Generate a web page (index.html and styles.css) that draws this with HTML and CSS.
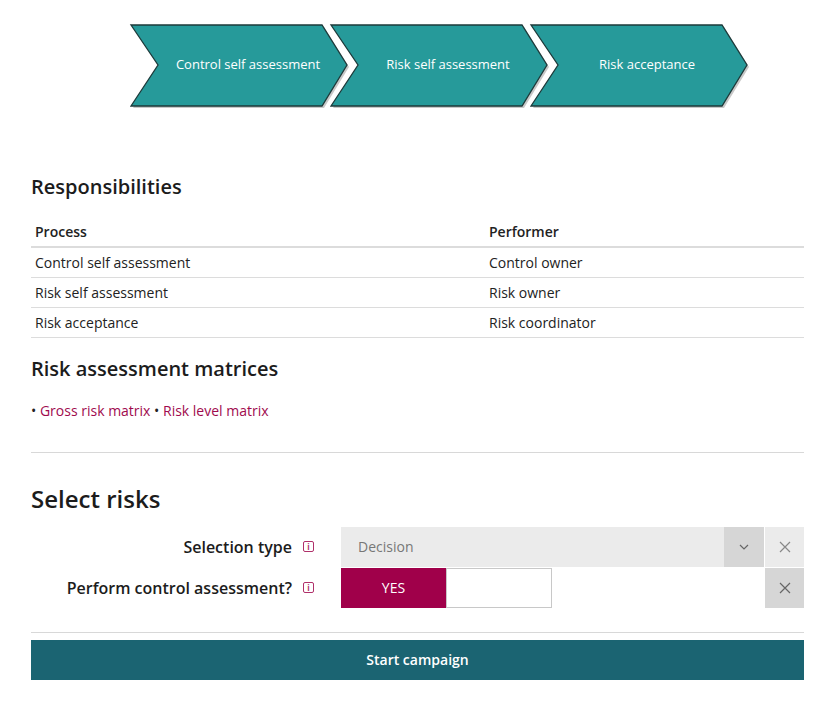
FILE: index.html
```html
<!DOCTYPE html>
<html>
<head>
<meta charset="utf-8">
<link rel="stylesheet" href="styles.css">
</head>
<body>
<div class="page">
  <div class="flow">
    <svg width="630" height="95" viewBox="0 0 630 95" xmlns="http://www.w3.org/2000/svg">
      <g class="shadow">
        <polygon points="8,7 199,7 224,47 199,88 8,88 35,47"/>
        <polygon points="208,7 399,7 424,47 399,88 208,88 235,47"/>
        <polygon points="408,7 599,7 624,47 599,88 408,88 435,47"/>
      </g>
      <g class="chev">
        <polygon points="6,5 197,5 222,45 197,86 6,86 33,45"/>
        <polygon points="206,5 397,5 422,45 397,86 206,86 233,45"/>
        <polygon points="406,5 597,5 622,45 597,86 406,86 433,45"/>
      </g>
      <g class="chev-text">
        <text x="123" y="49">Control self assessment</text>
        <text x="323" y="49">Risk self assessment</text>
        <text x="522" y="49">Risk acceptance</text>
      </g>
    </svg>
  </div>

  <h2 class="section-title">Responsibilities</h2>
  <table class="resp">
    <thead>
      <tr><th>Process</th><th>Performer</th></tr>
    </thead>
    <tbody>
      <tr><td>Control self assessment</td><td>Control owner</td></tr>
      <tr><td>Risk self assessment</td><td>Risk owner</td></tr>
      <tr><td>Risk acceptance</td><td>Risk coordinator</td></tr>
    </tbody>
  </table>

  <h2 class="section-title second">Risk assessment matrices</h2>
  <p class="links">• <a href="#">Gross risk matrix</a> • <a href="#">Risk level matrix</a></p>

  <hr class="sep">

  <h1 class="select-title">Select risks</h1>

  <div class="form">
    <div class="row">
      <div class="label">Selection type <span class="info">i</span></div>
      <div class="field">
        <div class="select">
          <span class="select-value">Decision</span>
          <span class="select-btn">
            <svg width="10" height="6" viewBox="0 0 10 6"><path d="M1 1 L5 5 L9 1" fill="none" stroke="#666" stroke-width="1.2"/></svg>
          </span>
        </div>
        <span class="clear light">
          <svg width="12" height="12" viewBox="0 0 12 12"><path d="M1 1 L11 11 M11 1 L1 11" stroke="#888" stroke-width="1.2"/></svg>
        </span>
      </div>
    </div>
    <div class="row">
      <div class="label">Perform control assessment? <span class="info">i</span></div>
      <div class="field">
        <div class="toggle">
          <span class="yes">YES</span>
          <span class="no"></span>
        </div>
        <span class="spacer"></span>
        <span class="clear">
          <svg width="12" height="12" viewBox="0 0 12 12"><path d="M1 1 L11 11 M11 1 L1 11" stroke="#666" stroke-width="1.2"/></svg>
        </span>
      </div>
    </div>
  </div>

  <hr class="sep bottom">

  <button class="start">Start campaign</button>
</div>
</body>
</html>
```

FILE: styles.css
```css
* { box-sizing: border-box; }
html, body { margin: 0; padding: 0; background: #fff; }
body {
  font-family: "Open Sans", "Liberation Sans", sans-serif;
  color: #222;
  font-size: 14px;
}
.page {
  padding: 20px 21px 20px 31px;
  display: flex;
  flex-direction: column;
}
.flow { padding-left: 94px; height: 95px; }
.flow svg { display: block; }
.shadow polygon { fill: #9a9a9a; opacity: 0.55; }
.chev polygon { fill: #269a9a; stroke: #1d3a3a; stroke-width: 1.3; }
.chev-text text {
  fill: #fff;
  font-family: "Open Sans", sans-serif;
  font-size: 13px;
  text-anchor: middle;
}
.section-title {
  font-size: 20px;
  font-weight: 600;
  margin: 58px 0 0 0;
  line-height: 28px;
  color: #1c1c1c;
}
.section-title.second { margin-top: 17px; }
.resp {
  border-collapse: collapse;
  width: 100%;
  margin-top: 16px;
  font-size: 14px;
}
.resp th {
  text-align: left;
  font-weight: 600;
  padding: 0 4px;
  height: 30px;
  border-bottom: 2px solid #dcdcdc;
  vertical-align: middle;
}
.resp td {
  padding: 0 4px;
  height: 30px;
  border-bottom: 1px solid #dcdcdc;
  vertical-align: middle;
}
.resp th:first-child, .resp td:first-child { width: 454px; }
.links {
  margin: 18px 0 0 0;
  font-size: 14px;
  line-height: 20px;
}
.links a { color: #a00a4e; text-decoration: none; }
.sep {
  border: 0;
  border-top: 1px solid #d8d8d8;
  margin: 31px 0 0 0;
  height: 0;
}
.select-title {
  font-size: 24px;
  font-weight: 600;
  margin: 30px 0 0 0;
  line-height: 32px;
  color: #1c1c1c;
}
.form {
  margin-top: 12px;
  display: flex;
  flex-direction: column;
  gap: 1px;
}
.row {
  display: flex;
  align-items: center;
  height: 40px;
}
.label {
  width: 310px;
  text-align: right;
  font-size: 16px;
  font-weight: 600;
  display: flex;
  justify-content: flex-end;
  align-items: center;
  gap: 11px;
  color: #1c1c1c;
}
.info {
  display: inline-flex;
  width: 11px;
  height: 11px;
  border: 1px solid #b0306a;
  border-radius: 2px;
  color: #b0306a;
  font-size: 8px;
  font-weight: 700;
  line-height: 8px;
  justify-content: center;
  align-items: center;
  margin-right: 27px;
}
.field {
  flex: 1;
  display: flex;
  height: 40px;
  gap: 1px;
}
.select {
  flex: 1;
  display: flex;
  background: #ebebeb;
}
.select-value {
  flex: 1;
  padding-left: 17px;
  display: flex;
  align-items: center;
  color: #777;
  font-size: 14px;
}
.select-btn {
  width: 40px;
  background: #d6d6d6;
  display: flex;
  align-items: center;
  justify-content: center;
}
.clear {
  width: 39px;
  background: #d6d6d6;
  display: flex;
  align-items: center;
  justify-content: center;
}
.clear.light { background: #ebebeb; }
.toggle {
  display: flex;
  width: 211px;
  height: 40px;
}
.yes {
  width: 105px;
  background: #a0004a;
  color: #fff;
  font-size: 14px;
  display: flex;
  align-items: center;
  justify-content: center;
}
.no {
  flex: 1;
  border: 1px solid #c8c8c8;
  background: #fff;
}
.spacer { flex: 1; }
.sep.bottom { margin-top: 24px; }
.start {
  margin-top: 7px;
  height: 40px;
  width: 100%;
  border: 0;
  background: #1b6472;
  color: #fff;
  font-family: "Open Sans", sans-serif;
  font-size: 14px;
  font-weight: 600;
}
```
